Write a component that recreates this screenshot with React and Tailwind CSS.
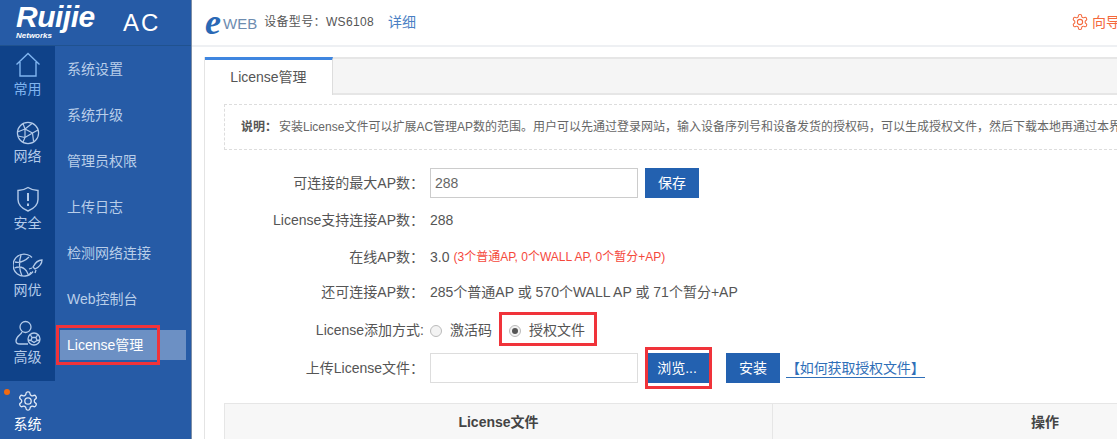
const font = "font-['Liberation_Sans','Noto_Sans_CJK_SC',sans-serif]";

function HomeIcon() {
  return (
    <svg width="26" height="26" viewBox="0 0 26 26" fill="none" stroke="currentColor" strokeWidth="1.4">
      <path d="M1.500 12.500 13 1.500l11.500 11M5 10v14h16V10" />
    </svg>
  );
}

function NetworkIcon() {
  return (
    <svg width="24" height="24" viewBox="0 0 24 24" fill="none" stroke="currentColor" strokeWidth="1.2">
      <circle cx="12" cy="12" r="10.600" />
      <path d="M9 8 16.500 12 9 16.500zM9 8 7 2.500M9 8 1.500 11M9 8l7-5.500M16.500 12l5.500-3M16.500 12l1 8M9 16.500l-2 4.500M9 16.500 2 15" />
    </svg>
  );
}

function ShieldIcon() {
  return (
    <svg width="24" height="26" viewBox="0 0 24 26" fill="none" stroke="currentColor" strokeWidth="1.4">
      <path d="M12 1.500c3 2 6.500 3 10 3v9c0 5-4 9-10 11.500C6 22.500 2 18.500 2 13.500v-9c3.500 0 7-1 10-3z" />
      <path d="M12 7v8M12 17.500v2.500" strokeWidth="2" />
    </svg>
  );
}

function RocketGlobeIcon() {
  return (
    <svg width="30" height="26" viewBox="0 0 30 26" fill="none" stroke="currentColor" strokeWidth="1.300">
      <path d="M20 18.500A11 11 0 1 1 19 4.500" />
      <path d="M2 9c5 1 9 0 14-5M1.500 15c5-2 9-1 12 3l2 4M8 2c-2 6-2 14 1 21" />
      <path d="M29 7c-4 0-7 3-9 7l2 2c4-2 7-5 7-9zM19 15l-3 1M23 17l-1 3M18 19l-2 3" />
    </svg>
  );
}

function UserIcon() {
  return (
    <svg width="26" height="26" viewBox="0 0 26 26" fill="none" stroke="currentColor" strokeWidth="1.300">
      <circle cx="10.500" cy="7" r="5.500" />
      <path d="M7 12c-1 3-6 4-6 9 0 2 2 3 4 3h8" />
      <circle cx="19" cy="19" r="6" />
      <path d="M17 17.500h4l1 3-3 2-3-2zM17 17.500l-1.500-2.500M21 17.500l1.500-2.500M22 20.500l3-.500M16 20.500l-3-.500" />
    </svg>
  );
}

function GearIcon({ size = 22 }) {
  return (
    <svg width={size} height={size} viewBox="0 0 24 24" fill="none" stroke="currentColor" strokeWidth="1.400">
      <path d="M12.220 2h-.440a2 2 0 0 0-2 2v.180a2 2 0 0 1-1 1.730l-.430.250a2 2 0 0 1-2 0l-.150-.080a2 2 0 0 0-2.730.730l-.220.380a2 2 0 0 0 .730 2.730l.150.100a2 2 0 0 1 1 1.720v.510a2 2 0 0 1-1 1.740l-.150.090a2 2 0 0 0-.730 2.730l.220.380a2 2 0 0 0 2.730.730l.150-.080a2 2 0 0 1 2 0l.430.250a2 2 0 0 1 1 1.730V20a2 2 0 0 0 2 2h.440a2 2 0 0 0 2-2v-.180a2 2 0 0 1 1-1.730l.430-.250a2 2 0 0 1 2 0l.150.080a2 2 0 0 0 2.730-.730l.220-.390a2 2 0 0 0-.730-2.730l-.150-.080a2 2 0 0 1-1-1.740v-.500a2 2 0 0 1 1-1.740l.150-.090a2 2 0 0 0 .730-2.730l-.220-.380a2 2 0 0 0-2.730-.730l-.150.080a2 2 0 0 1-2 0l-.430-.250a2 2 0 0 1-1-1.730V4a2 2 0 0 0-2-2z" />
      <circle cx="12" cy="12" r="3.500" />
    </svg>
  );
}

const railItems = [
  { label: "常用", icon: <HomeIcon />, color: "text-[#7fb4f0]" },
  { label: "网络", icon: <NetworkIcon />, color: "text-[#b4cbea]" },
  { label: "安全", icon: <ShieldIcon />, color: "text-[#b4cbea]" },
  { label: "网优", icon: <RocketGlobeIcon />, color: "text-[#b4cbea]" },
  { label: "高级", icon: <UserIcon />, color: "text-[#b4cbea]" }
];

const menuItems = ["系统设置", "系统升级", "管理员权限", "上传日志", "检测网络连接", "Web控制台", "License管理"];

function Sidebar() {
  return (
    <aside className="flex h-full w-[192px] shrink-0 flex-col border-r border-[#7d8ea6] bg-[#265ba6]">
      <div className="flex h-[46px] shrink-0 items-center border-b border-[#20528f] pl-[16px] text-white">
        <div className="w-[94px]">
          <div className="text-[30px] leading-[24px] font-bold tracking-[-0.5px] italic">Ruijie</div>
          <div className="mt-[3px] text-[8px] leading-[8px] font-bold italic">Networks</div>
        </div>
        <span className="ml-[13px] text-[24px] tracking-[2px]">AC</span>
      </div>
      <div className="flex min-h-0 flex-1">
        <div className="flex w-[55px] shrink-0 flex-col">
          <div className="bg-[#0f4289]">
            {railItems.map((item) => (
              <div key={item.label} className={`flex h-[67px] flex-col items-center justify-end pb-[16px] ${item.color}`}>
                {item.icon}
                <span className="mt-[3px] text-[14px] leading-[16px]">{item.label}</span>
              </div>
            ))}
          </div>
          <div className="relative flex flex-1 flex-col items-center pt-[9px] text-[#dfe8f5]">
            <span className="absolute top-[8px] left-[4px] h-[6px] w-[6px] rounded-full bg-[#f26a10]" />
            <GearIcon />
            <span className="mt-[4px] text-[14px] leading-[16px] text-white">系统</span>
          </div>
        </div>
        <nav className="flex-1 px-[5px]">
          {menuItems.map((item) => (
            <div key={item} className="flex h-[46px] items-center">
              <div className={`flex h-[30px] w-full items-center pl-[7px] text-[14px] ${item === "License管理" ? "bg-[#6c90c4] text-white" : "text-[#b9cee9]"}`}>
                {item}
              </div>
            </div>
          ))}
        </nav>
      </div>
    </aside>
  );
}

function TopBar() {
  return (
    <header className="flex h-[47px] shrink-0 items-center border-b-2 border-[#eef0f3] pb-[1px] pl-[13px] text-[12px] text-[#555]">
      <span className="text-[36px] leading-[30px] font-bold text-[#2a68b5] italic font-['Liberation_Serif',serif]">e</span>
      <span className="mt-[4px] ml-[2px] text-[15px] text-[#6d8cb0]">WEB</span>
      <span className="ml-[7px] tracking-[0.35px]">设备型号：WS6108</span>
      <span className="ml-[14px] text-[14px] text-[#4a7fc4]">详细</span>
      <div className="ml-auto flex items-center gap-[3px] text-[14px] whitespace-nowrap text-[#f4683c]">
        <GearIcon size={18} />
        <span className="w-[25px] overflow-hidden">向导</span>
      </div>
    </header>
  );
}

function Row({ label, children, height }) {
  return (
    <div className={`flex items-center ${height}`}>
      <div className="w-[200px] shrink-0 text-right text-[14px] whitespace-nowrap text-[#555]">{label}</div>
      <div className="ml-[6px] flex items-center text-[14px] whitespace-nowrap text-[#555]">{children}</div>
    </div>
  );
}

function Btn({ children, className = "" }) {
  return (
    <button type="button" className={`flex h-[30px] w-[54px] items-center justify-center bg-[#2361b0] text-[14px] text-white ${className}`}>
      {children}
    </button>
  );
}

function Radio({ checked }) {
  return (
    <span className="flex h-[12px] w-[12px] items-center justify-center rounded-full border border-[#bbb] bg-[#f3f3f3]">
      {checked && <span className="h-[6px] w-[6px] rounded-full bg-[#555]" />}
    </span>
  );
}

function LicensePanel() {
  return (
    <div className="mt-[10px] ml-[12px] flex min-h-0 flex-1 flex-col border-l border-[#e4e4e4]">
      <div className="flex h-[38px] shrink-0 border-y-2 border-[#e6e6e6] bg-[#f5f5f5]">
        <div className="my-[-2px] flex w-[128px] items-center justify-center border-t-[3px] border-r border-t-[#3f86e0] border-r-[#ddd] bg-white text-[14px] text-[#555]">
          License管理
        </div>
      </div>
      <div className="pl-[19px]">
        <div className="mt-[9px] flex h-[46px] items-center border-y border-l border-dashed border-[#ddd] pl-[16px] text-[12px] whitespace-nowrap text-[#666]">
          <b className="mr-[2px] text-[#555]">说明：</b>
          安装License文件可以扩展AC管理AP数的范围。用户可以先通过登录网站，输入设备序列号和设备发货的授权码，可以生成授权文件，然后下载本地再通过本界面上传安装。
        </div>
        <div className="mt-[18px]">
          <Row label="可连接的最大AP数：" height="h-[30px]">
            <input readOnly value="288" className="h-[30px] w-[208px] border border-[#ccc] px-[4px] text-[14px] text-[#666] outline-none" />
            <Btn className="ml-[7px]">保存</Btn>
          </Row>
          <Row label="License支持连接AP数：" height="h-[44px]">288</Row>
          <Row label="在线AP数：" height="h-[30px]">
            3.0
            <span className="ml-[4px] text-[12px] text-[#f5483c]">(3个普通AP, 0个WALL AP, 0个暂分+AP)</span>
          </Row>
          <Row label="还可连接AP数：" height="h-[40px]">285个普通AP 或 570个WALL AP 或 71个暂分+AP</Row>
          <Row label="License添加方式:" height="h-[37px]">
            <Radio />
            <span className="ml-[8px]">激活码</span>
            <span className="ml-[17px]"><Radio checked /></span>
            <span className="ml-[8px]">授权文件</span>
          </Row>
          <Row label="上传License文件：" height="h-[38px]">
            <input readOnly className="h-[30px] w-[208px] border border-[#ddd] outline-none" />
            <Btn className="ml-[7px] w-[64px]">浏览...</Btn>
            <Btn className="ml-[17px]">安装</Btn>
            <a className="mt-[2px] ml-[6px] border-b border-[#2f6fb8] text-[14px] leading-[17px] tracking-[-0.15px] text-[#2f6fb8]">【如何获取授权文件】</a>
          </Row>
        </div>
        <div className="mt-[16px] flex h-[60px] w-[1000px] border border-[#e6e6e6] bg-[#f7f7f7] text-[14px] font-bold text-[#444]">
          <div className="flex h-[36px] w-[548px] shrink-0 items-center justify-center border-r border-[#e6e6e6]">License文件</div>
          <div className="flex h-[36px] w-[544px] shrink-0 items-center justify-center">操作</div>
        </div>
      </div>
    </div>
  );
}

export default function App() {
  return (
    <div className={`relative flex h-screen w-screen overflow-hidden bg-white ${font}`}>
      <Sidebar />
      <main className="flex h-full min-w-0 flex-1 flex-col overflow-hidden">
        <TopBar />
        <LicensePanel />
      </main>
      {/* red annotation boxes drawn over the screenshot */}
      <div className="absolute top-[325px] left-[56px] h-[40px] w-[104px] border-[3px] border-[#f0333a]" />
      <div className="absolute top-[312px] left-[499px] h-[34px] w-[98px] border-[3px] border-[#f0333a]" />
      <div className="absolute top-[347px] left-[645px] h-[42px] w-[67px] border-[3px] border-[#f0333a]" />
    </div>
  );
}
